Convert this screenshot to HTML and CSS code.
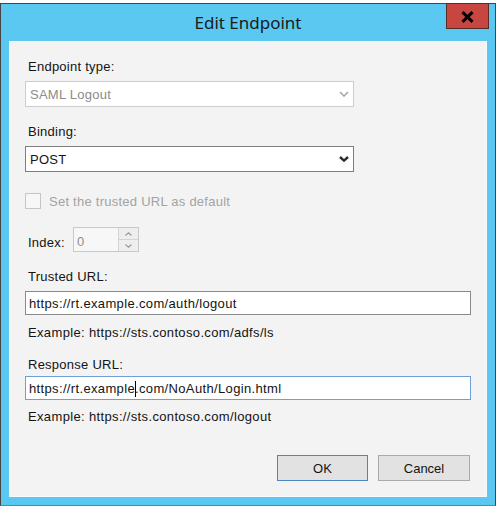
FILE: index.html
```html
<!DOCTYPE html>
<html lang="en">
<head>
<meta charset="utf-8">
<title>Edit Endpoint</title>
<link rel="stylesheet" href="styles.css">
</head>
<body>
<div class="top-strip"></div>
<div class="window">
  <div class="titlebar">
    <div class="tb-spacer"></div>
    <div class="title">Edit Endpoint</div>
    <div class="close">
      <svg width="13" height="12" viewBox="0 0 13 12"><path d="M1.5 1.2 L11.5 10.8 M11.5 1.2 L1.5 10.8" stroke="#000" stroke-width="3" fill="none"/></svg>
    </div>
  </div>
  <div class="panel">
    <div class="label first">Endpoint type:</div>
    <div class="combo disabled gap7">
      <span class="combo-text">SAML Logout</span>
      <svg class="chev" width="10" height="6" viewBox="0 0 10 6"><polyline points="1,1 5,5 9,1" fill="none" stroke="#a8a8a8" stroke-width="1.6"/></svg>
    </div>
    <div class="label gap17">Binding:</div>
    <div class="combo gap7">
      <span class="combo-text">POST</span>
      <svg class="chev" width="10" height="6" viewBox="0 0 10 6"><polyline points="1,1 5,4.6 9,1" fill="none" stroke="#2b2b2b" stroke-width="2.4"/></svg>
    </div>
    <div class="check-row">
      <div class="checkbox"></div>
      <span class="check-text">Set the trusted URL as default</span>
    </div>
    <div class="index-row">
      <div class="label index-label">Index:</div>
      <div class="spinner">
        <span class="spin-value">0</span>
        <div class="spin-buttons">
          <div class="spin-btn"><svg width="7" height="4" viewBox="0 0 7 4"><polyline points="0.5,3.5 3.5,0.8 6.5,3.5" fill="none" stroke="#9a9a9a" stroke-width="1.2"/></svg></div>
          <div class="spin-btn"><svg width="7" height="4" viewBox="0 0 7 4"><polyline points="0.5,0.5 3.5,3.2 6.5,0.5" fill="none" stroke="#9a9a9a" stroke-width="1.2"/></svg></div>
        </div>
      </div>
    </div>
    <div class="label gap17">Trusted URL:</div>
    <div class="textbox gap7">https://rt.example.com/auth/logout</div>
    <div class="label hint gap10">Example: https://sts.contoso.com/adfs/ls</div>
    <div class="label gap17">Response URL:</div>
    <div class="textbox focused gap4">https://rt.example<span class="caret"></span>.com/NoAuth/Login.html</div>
    <div class="label hint gap9">Example: https://sts.contoso.com/logout</div>
    <div class="buttons">
      <div class="btn default">OK</div>
      <div class="btn">Cancel</div>
    </div>
  </div>
</div>
</body>
</html>
```
FILE: styles.css
```css
html, body {
  margin: 0;
  padding: 0;
  background: #ffffff;
  overflow: hidden;
}

body {
  width: 496px;
  height: 506px;
  font-family: "Liberation Sans", Arial, sans-serif;
  font-size: 13px;
  letter-spacing: 0.25px;
  color: #141414;
}

.top-strip {
  height: 3px;
  background: #ffffff;
}

.window {
  box-sizing: border-box;
  width: 496px;
  height: 503px;
  background: #5ac8f0;
  border: 1px solid #454545;
  border-bottom-color: #3f8fb0;
  padding: 0 8px 8px 8px;
  display: flex;
  flex-direction: column;
}

.titlebar {
  height: 37px;
  margin: 0 -8px;
  display: grid;
  grid-template-columns: 1fr auto 1fr;
  align-items: start;
}

.title {
  font-family: "Noto Sans", "Open Sans", sans-serif;
  font-size: 17px;
  letter-spacing: 0;
  line-height: 24px;
  padding-top: 7px;
  color: #1b1b1b;
  white-space: nowrap;
}

.close {
  justify-self: end;
  box-sizing: border-box;
  width: 43px;
  height: 26px;
  margin-top: -1px;
  margin-right: 6px;
  background: #c7463f;
  border: 1px solid #5a2a26;
  display: flex;
  align-items: center;
  justify-content: center;
}

.close svg {
  margin-top: 1px;
}

.panel {
  box-sizing: border-box;
  height: 456px;
  background: #f3f3f3;
  border: 1px solid #f9f9f9;
  padding: 17px 15px 0 15px;
  display: flex;
  flex-direction: column;
  align-items: flex-start;
}

.label {
  line-height: 15px;
  margin-left: 3px;
  white-space: nowrap;
}

.first { margin-top: 0; }
.gap4 { margin-top: 4px; }
.gap7 { margin-top: 7px; }
.gap9 { margin-top: 9px; }
.gap10 { margin-top: 10px; }
.gap17 { margin-top: 17px; }

.combo {
  box-sizing: border-box;
  width: 329px;
  height: 26px;
  background: #ffffff;
  border: 1px solid #7e7e7e;
  display: flex;
  align-items: center;
  justify-content: space-between;
  padding: 0 4px 0 4px;
}

.combo.disabled {
  border-color: #cdcdcd;
  color: #8c8c8c;
}

.combo-text {
  line-height: 15px;
  padding-top: 1px;
}

.chev {
  display: block;
}

.check-row {
  margin-top: 21px;
  height: 16px;
  display: flex;
  align-items: center;
  gap: 8px;
}

.checkbox {
  box-sizing: border-box;
  width: 16px;
  height: 16px;
  border: 1px solid #c6c6c6;
  background: #f7f7f7;
}

.check-text {
  color: #a3a3a3;
  line-height: 15px;
  padding-top: 1px;
}

.index-row {
  margin-top: 18px;
  display: flex;
  align-items: flex-start;
}

.index-label {
  width: 45px;
  margin-top: 8px;
}

.spinner {
  box-sizing: border-box;
  width: 66px;
  height: 25px;
  background: #f7f7f7;
  border: 1px solid #c9c9c9;
  display: flex;
  justify-content: space-between;
}

.spin-value {
  color: #8e8e8e;
  line-height: 15px;
  padding: 6px 0 0 3px;
}

.spin-buttons {
  width: 19px;
  display: flex;
  flex-direction: column;
  border-left: 1px solid #d4d4d4;
}

.spin-btn {
  flex: 1;
  display: flex;
  align-items: center;
  justify-content: center;
  background: #eeeeee;
}

.spin-btn + .spin-btn {
  border-top: 1px solid #d4d4d4;
}

.textbox {
  box-sizing: border-box;
  width: 446px;
  height: 24px;
  background: #ffffff;
  border: 1px solid #8a8a8a;
  padding: 4px 3px 0 3px;
  line-height: 15px;
  letter-spacing: 0.35px;
  white-space: nowrap;
}

.textbox.focused {
  border-color: #6f9fd8;
}

.caret {
  display: inline-block;
  width: 1px;
  height: 16px;
  background: #000000;
  vertical-align: -4px;
  margin: 0 -1px 0 0;
}

.hint {
  letter-spacing: 0.35px;
}

.buttons {
  margin-top: 31px;
  align-self: stretch;
  display: flex;
  justify-content: flex-end;
  gap: 10px;
  padding-right: 1px;
}

.btn {
  box-sizing: border-box;
  width: 92px;
  height: 26px;
  background: #e2e2e2;
  border: 1px solid #a9a9a9;
  display: flex;
  align-items: center;
  justify-content: center;
  letter-spacing: 0;
  line-height: 15px;
}

.btn.default {
  width: 91px;
  border-color: #4a86c2;
}
```
